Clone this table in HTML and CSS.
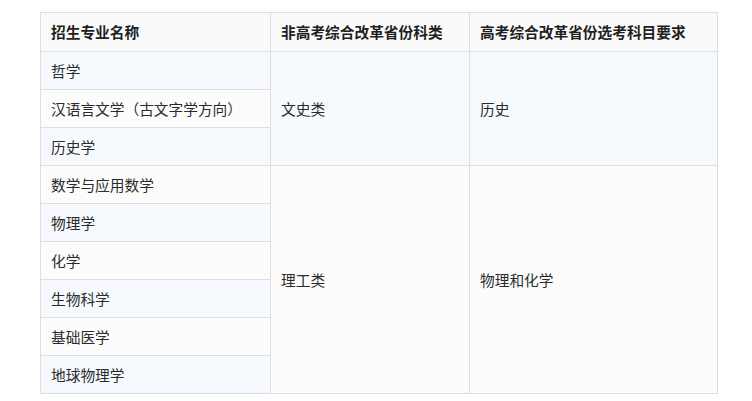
FILE: index.html
```html
<!DOCTYPE html>
<html lang="zh-CN">
<head>
<meta charset="utf-8">
<title>招生专业</title>
<link rel="stylesheet" href="styles.css">
</head>
<body>
<div class="wrap">
<table class="majors">
  <colgroup>
    <col class="c1"><col class="c2"><col class="c3">
  </colgroup>
  <thead>
    <tr><th>招生专业名称</th><th>非高考综合改革省份科类</th><th>高考综合改革省份选考科目要求</th></tr>
  </thead>
  <tbody>
    <tr class="odd"><td>哲学</td><td rowspan="3">文史类</td><td rowspan="3">历史</td></tr>
    <tr class="even"><td>汉语言文学（古文字学方向）</td></tr>
    <tr class="odd"><td>历史学</td></tr>
    <tr class="even"><td>数学与应用数学</td><td rowspan="6">理工类</td><td rowspan="6">物理和化学</td></tr>
    <tr class="odd"><td>物理学</td></tr>
    <tr class="even"><td>化学</td></tr>
    <tr class="odd"><td>生物科学</td></tr>
    <tr class="even"><td>基础医学</td></tr>
    <tr class="odd"><td>地球物理学</td></tr>
  </tbody>
</table>
</div>
</body>
</html>
```
FILE: styles.css
```css
html, body {
  margin: 0;
  padding: 0;
  background: #ffffff;
}
body {
  font-family: "Noto Sans CJK SC", "Noto Sans", sans-serif;
  font-size: 14.7px;
  color: #2b2b2b;
}
.wrap {
  padding: 12px 0 0 40px;
}
.majors {
  border-collapse: collapse;
  table-layout: fixed;
  width: 677px;
}
.c1 { width: 230px; }
.c2 { width: 199px; }
.c3 { width: 248px; }
.majors th,
.majors td {
  border: 1px solid #dedede;
  padding: 0 10px;
  text-align: left;
  vertical-align: middle;
  line-height: 20px;
}
.majors th {
  height: 39px;
  box-sizing: border-box;
  background: #fafafa;
  font-weight: bold;
  color: #1f1f1f;
}
.majors td {
  height: 38px;
  box-sizing: border-box;
}
.odd td { background: #f6f9fe; }
.even td { background: #fcfcfc; }
```
